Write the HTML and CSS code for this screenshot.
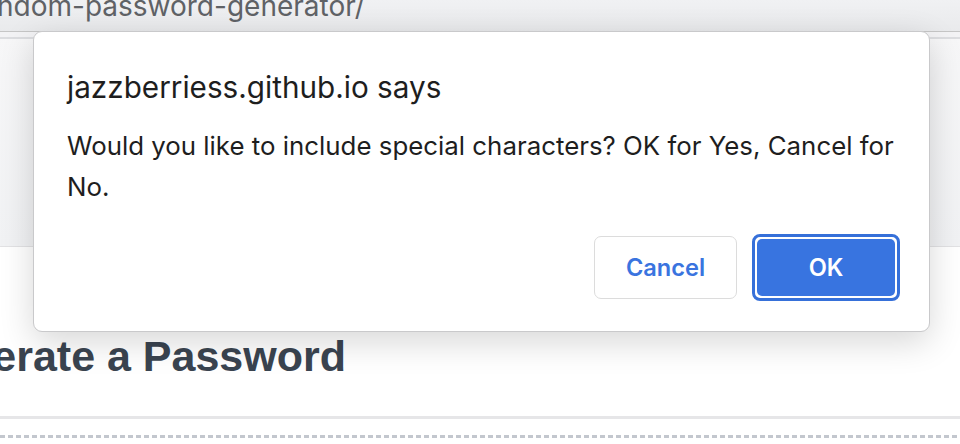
FILE: index.html
```html
<!DOCTYPE html>
<html>
<head>
<meta charset="utf-8">
<link rel="stylesheet" href="styles.css">
</head>
<body>
<div class="screen">
  <div class="urlbar"><span class="url">ndom-password-generator/</span></div>
  <div class="page">
    <div class="header">
      <div class="tabline"></div>
    </div>
    <div class="content">
      <div class="title-wrap">
        <h1 class="title">Generate a Password</h1>
      </div>
      <div class="rule"></div>
      <div class="dashed"></div>
    </div>
  </div>
  <div class="dialog">
    <div class="dlg-title">jazzberriess.github.io says</div>
    <div class="dlg-msg">Would you like to include special characters? OK for Yes, Cancel for No.</div>
    <div class="dlg-buttons">
      <button class="btn btn-cancel">Cancel</button>
      <button class="btn btn-ok"><span class="ok-inner">OK</span></button>
    </div>
  </div>
</div>
</body>
</html>
```
FILE: styles.css
```css
html, body {
  margin: 0;
  padding: 0;
  background: #ffffff;
}
.screen {
  position: relative;
  width: 960px;
  height: 444px;
  overflow: hidden;
}
.urlbar {
  height: 31px;
  background: linear-gradient(#f0f1f3, #e9eaec);
  border-bottom: 1px solid #c6c6c6;
  overflow: hidden;
}
.url {
  display: block;
  margin-top: -9px;
  margin-left: -3px;
  font-family: Inter, "Noto Sans", sans-serif;
  font-size: 28px;
  line-height: 30px;
  color: #5f6266;
  white-space: nowrap;
}
.header {
  height: 214px;
  background: linear-gradient(#f7f7f8, #f1f2f4);
  border-bottom: 1px solid #e2e2e4;
}
.tabline {
  height: 5px;
  border-bottom: 2px solid #dcdde0;
  background: #f3f3f5;
}
.content {
  padding-top: 84px;
}
.title-wrap {
  display: flex;
  justify-content: flex-end;
  width: 346px;
}
.title {
  flex-shrink: 0;
  margin: 0;
  font-family: "Liberation Sans", Arial, sans-serif;
  font-weight: bold;
  font-size: 43px;
  line-height: 50px;
  color: #3a4450;
  white-space: nowrap;
}
.rule {
  margin-top: 35px;
  height: 3px;
  background: #e6e6e8;
}
.dashed {
  margin-top: 16px;
  height: 3px;
  background: repeating-linear-gradient(90deg, #c3c7ce 0 5px, transparent 5px 8px);
}
.dialog {
  position: absolute;
  left: 33px;
  top: 31px;
  width: 897px;
  height: 301px;
  box-sizing: border-box;
  background: #ffffff;
  border: 1px solid #c9c9cb;
  border-radius: 9px;
  box-shadow: 0 10px 34px rgba(0, 0, 0, 0.16);
  padding: 37px 29px 0 33px;
  font-family: Inter, "Noto Sans", sans-serif;
  color: #1e1e1e;
}
.dlg-title {
  font-size: 29.7px;
  line-height: 36px;
}
.dlg-msg {
  width: 835px;
  margin-top: 20px;
  font-size: 25.85px;
  line-height: 41px;
}
.dlg-buttons {
  display: flex;
  justify-content: flex-end;
  align-items: center;
  gap: 15px;
  margin-top: 27px;
}
.btn {
  font-family: Inter, "Noto Sans", sans-serif;
  font-size: 23.6px;
  font-weight: 600;
  border-radius: 7px;
  cursor: pointer;
}
.btn-cancel {
  width: 143px;
  height: 63px;
  background: #ffffff;
  border: 1px solid #dcdcdc;
  color: #3a74df;
}
.btn-ok {
  width: 148px;
  height: 67px;
  padding: 2px;
  background: #ffffff;
  border: 3px solid #3670d9;
  border-radius: 8px;
}
.ok-inner {
  display: flex;
  align-items: center;
  justify-content: center;
  width: 100%;
  height: 100%;
  background: #3874e0;
  color: #ffffff;
  border-radius: 5px;
}
```
